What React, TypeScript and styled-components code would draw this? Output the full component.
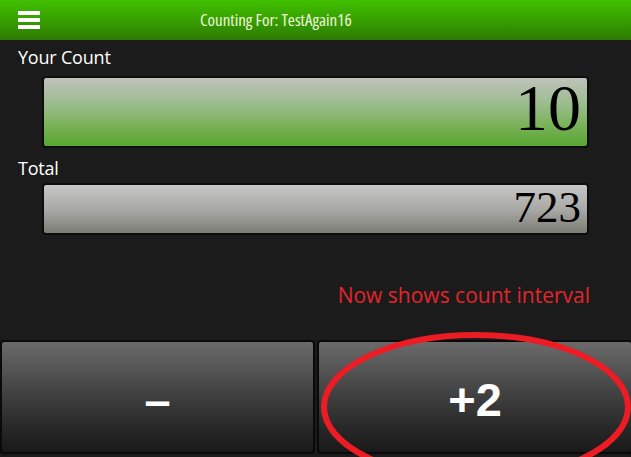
import React from 'react'
import styled, { createGlobalStyle } from 'styled-components'

const GlobalStyle = createGlobalStyle`
  html, body {
    margin: 0;
    padding: 0;
    background: #1b1b1b;
    overflow: hidden;
  }
  body {
    font-family: "Open Sans", "Liberation Sans", sans-serif;
  }
`

const Page = styled.div`
  width: 631px;
  height: 457px;
  display: flex;
  flex-direction: column;
  background: #1b1b1b;
  overflow: hidden;
`

const Header = styled.div`
  height: 40px;
  flex-shrink: 0;
  display: flex;
  align-items: center;
  padding-left: 18px;
  background: linear-gradient(to bottom, #41c100 0%, #37a000 50%, #2d7a00 100%);
`

const Burger = styled.div`
  display: flex;
  flex-direction: column;
  gap: 3px;
  width: 22px;

  span {
    display: block;
    height: 4px;
    background: #ffffff;
  }
`

const Title = styled.div`
  margin-left: 160px;
  color: #f0f6dc;
  font-size: 17px;
  font-stretch: 80%;
  line-height: 20px;
`

const Content = styled.div`
  display: flex;
  flex-direction: column;
  padding: 0 42px 0 18px;
`

const Label = styled.div<{ $top: number }>`
  color: #ffffff;
  font-size: 18px;
  line-height: 24px;
  margin-top: ${({ $top }) => $top}px;
  letter-spacing: -0.2px;
`

const Readout = styled.div<{ $green?: boolean; $height: number; $size: number; $gap: number }>`
  margin-left: 24px;
  margin-top: ${({ $gap }) => $gap}px;
  height: ${({ $height }) => $height}px;
  box-sizing: border-box;
  border: 2px solid #0d0d0d;
  border-radius: 4px;
  display: flex;
  align-items: flex-end;
  justify-content: flex-end;
  padding-right: 6px;
  font-family: "Liberation Serif", "Times New Roman", serif;
  font-size: ${({ $size }) => $size}px;
  color: #000;
  background: ${({ $green }) =>
    $green
      ? 'linear-gradient(to bottom, #bfc2bb 0%, #9fbd92 35%, #79b259 70%, #58a530 100%)'
      : 'linear-gradient(to bottom, #c6c6c6 0%, #a9aaa6 50%, #7b7d75 100%)'};
`

const Note = styled.div`
  align-self: flex-end;
  margin-top: 46px;
  margin-right: -1px;
  color: #e3252c;
  font-size: 21px;
  line-height: 28px;
`

const Buttons = styled.div`
  position: relative;
  flex-shrink: 0;
  margin-top: 31px;
  display: grid;
  grid-template-columns: 315px 316px;
  gap: 2px;
  height: 114px;
`

const CountButton = styled.div`
  box-sizing: border-box;
  border: 2px solid #0a0a0a;
  border-radius: 4px;
  background: linear-gradient(to bottom, #6a6a6a 0%, #474747 40%, #2a2a2a 75%, #191919 100%);
  color: #ffffff;
  display: flex;
  align-items: center;
  justify-content: center;
  font-family: "Liberation Sans", Arial, sans-serif;
  font-weight: bold;
  font-size: 47px;
  padding-top: 4px;
`

const Circle = styled.svg`
  position: absolute;
  left: 318px;
  top: -10px;
  width: 320px;
  height: 160px;
  pointer-events: none;
`

export default function App() {
  return (
    <Page>
      <GlobalStyle />
      <Header>
        <Burger>
          <span />
          <span />
          <span />
        </Burger>
        <Title>Counting For: TestAgain16</Title>
      </Header>
      <Content>
        <Label $top={5}>Your Count</Label>
        <Readout $green $height={72} $size={66} $gap={7}>
          10
        </Readout>
        <Label $top={8}>Total</Label>
        <Readout $height={52} $size={45} $gap={3}>
          723
        </Readout>
        <Note>Now shows count interval</Note>
      </Content>
      <Buttons>
        <CountButton>–</CountButton>
        <CountButton>+2</CountButton>
        <Circle viewBox="0 0 320 160">
          <ellipse cx="158" cy="77" rx="152" ry="72" fill="none" stroke="#ec1c24" strokeWidth="6" />
        </Circle>
      </Buttons>
    </Page>
  )
}
